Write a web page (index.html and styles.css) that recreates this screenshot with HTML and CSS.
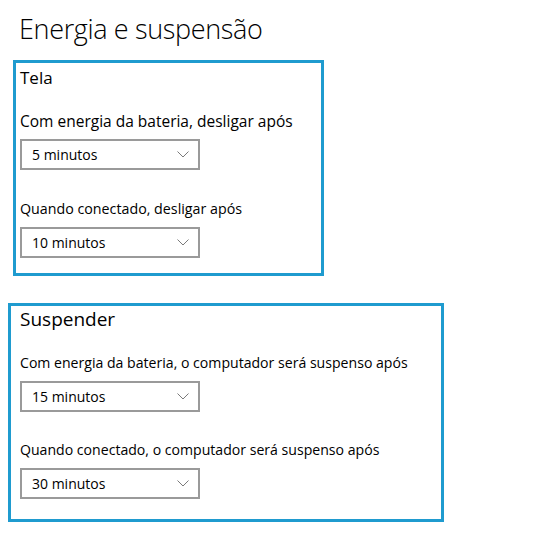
FILE: index.html
```html
<!DOCTYPE html>
<html lang="pt-BR">
<head>
<meta charset="utf-8">
<title>Energia e suspensão</title>
<link rel="stylesheet" href="styles.css">
</head>
<body>
<main class="page">
  <h1 class="title">Energia e suspensão</h1>

  <section class="group group-screen">
    <h2 class="group-title group-title-small">Tela</h2>
    <div class="field">
      <div class="field-label field-label-wide">Com energia da bateria, desligar após</div>
      <div class="select">
        <span class="select-value">5 minutos</span>
        <svg class="chevron" width="12" height="7" viewBox="0 0 12 7"><path d="M0.5 0.5 L6 6 L11.5 0.5" fill="none" stroke="#7a7a7a" stroke-width="1"/></svg>
      </div>
    </div>
    <div class="field">
      <div class="field-label field-label-mid">Quando conectado, desligar após</div>
      <div class="select">
        <span class="select-value">10 minutos</span>
        <svg class="chevron" width="12" height="7" viewBox="0 0 12 7"><path d="M0.5 0.5 L6 6 L11.5 0.5" fill="none" stroke="#7a7a7a" stroke-width="1"/></svg>
      </div>
    </div>
  </section>

  <section class="group group-sleep">
    <h2 class="group-title group-title-large">Suspender</h2>
    <div class="field">
      <div class="field-label">Com energia da bateria, o computador será suspenso após</div>
      <div class="select">
        <span class="select-value">15 minutos</span>
        <svg class="chevron" width="12" height="7" viewBox="0 0 12 7"><path d="M0.5 0.5 L6 6 L11.5 0.5" fill="none" stroke="#7a7a7a" stroke-width="1"/></svg>
      </div>
    </div>
    <div class="field">
      <div class="field-label">Quando conectado, o computador será suspenso após</div>
      <div class="select">
        <span class="select-value">30 minutos</span>
        <svg class="chevron" width="12" height="7" viewBox="0 0 12 7"><path d="M0.5 0.5 L6 6 L11.5 0.5" fill="none" stroke="#7a7a7a" stroke-width="1"/></svg>
      </div>
    </div>
  </section>
</main>
</body>
</html>
```

FILE: styles.css
```css
* { box-sizing: border-box; }

html, body {
  margin: 0;
  background: #ffffff;
}

body {
  font-family: "Open Sans", "Noto Sans", sans-serif;
  color: #000000;
}

.page {
  display: flex;
  flex-direction: column;
  align-items: flex-start;
  padding: 11px 0 0 0;
}

.title {
  margin: 0 0 13px 19px;
  font-size: 27px;
  line-height: 36px;
  font-weight: 300;
  letter-spacing: -0.35px;
}

.group {
  display: flex;
  flex-direction: column;
  align-items: flex-start;
  border: 3px solid #1f9bcf;
}

.group-screen {
  margin-left: 13px;
  width: 311px;
  padding: 3px 0 15px 4px;
  gap: 29px;
}

.group-sleep {
  margin-top: 27px;
  margin-left: 8px;
  width: 436px;
  padding: 0 0 20px 9px;
  gap: 28px;
}

.group-title {
  margin: 0 0 -8px 0;
  font-weight: 400;
}

.group-title-small {
  font-size: 17px;
  line-height: 24px;
}

.group-title-large {
  font-size: 19px;
  line-height: 26px;
  margin-bottom: -7px;
}

.field {
  display: flex;
  flex-direction: column;
  gap: 8px;
}

.field-label {
  font-size: 14.1px;
  line-height: 20px;
}

.field-label-wide {
  font-size: 15.5px;
}

.field-label-mid {
  font-size: 14.25px;
}

.select {
  display: flex;
  align-items: center;
  justify-content: space-between;
  width: 180px;
  height: 31px;
  border: 2px solid #9a9a9a;
  padding: 0 9px 0 10px;
  background: #ffffff;
}

.select-value {
  font-size: 14px;
  line-height: 20px;
}

.chevron {
  display: block;
}
```
